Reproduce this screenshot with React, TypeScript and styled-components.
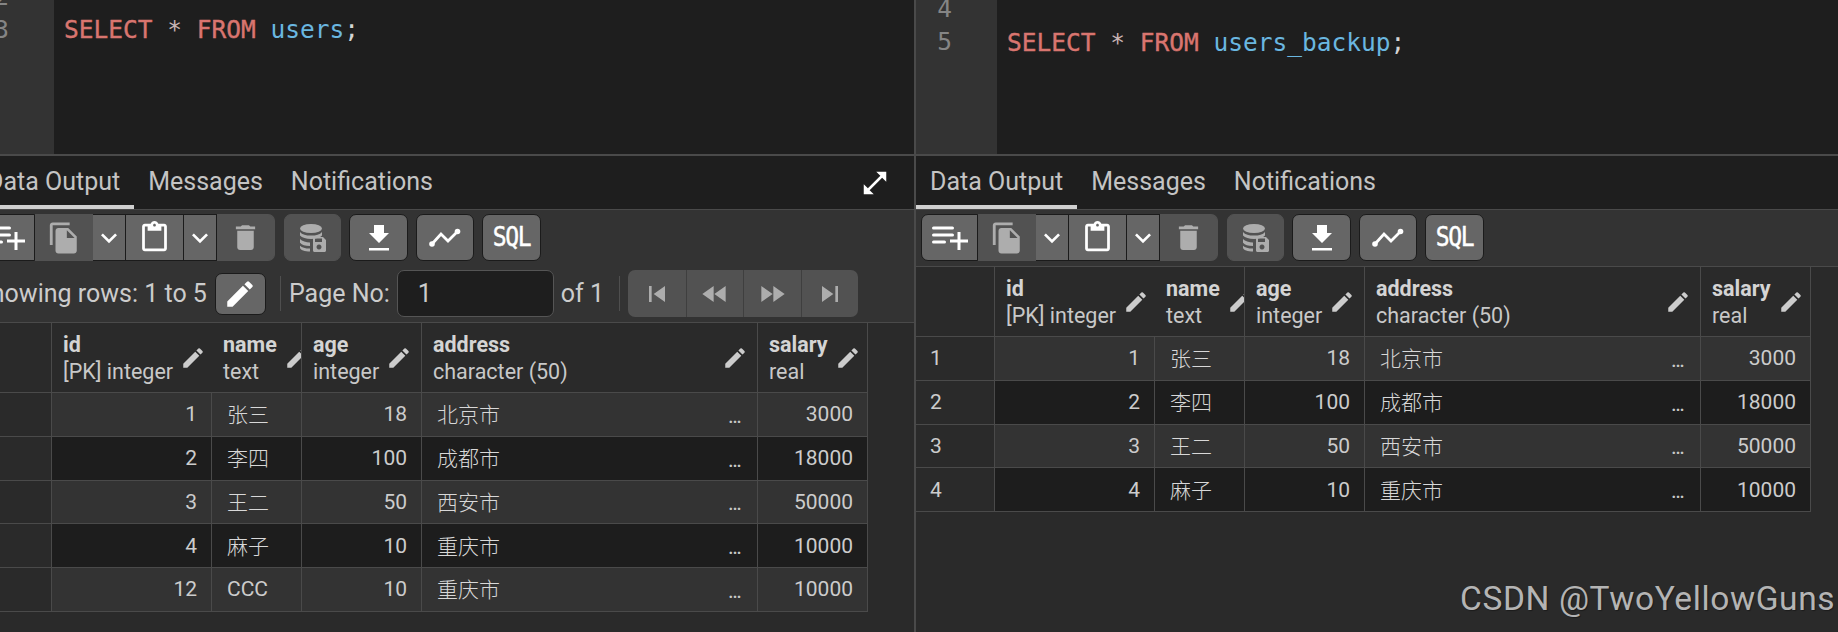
import React from "react";
import styled, { createGlobalStyle } from "styled-components";
import {
  MdContentPaste, MdDelete, MdEdit, MdFastForward, MdFastRewind, MdFileCopy,
  MdKeyboardArrowDown, MdOpenInFull, MdSkipNext, MdSkipPrevious,
} from "react-icons/md";

const UI = `Roboto, "Noto Sans CJK SC", sans-serif`;
const COLS = "79px 160px 90px 120px 336px 110px";

const Global = createGlobalStyle`
  html, body { margin: 0; padding: 0; background: #2a2a2a; }
  body { width: 1838px; height: 632px; overflow: hidden; font-family: ${UI}; }
`;

const Page = styled.div`
  position: relative;
  display: grid;
  grid-template-columns: 914px 924px;
  width: 1838px;
  height: 632px;
  overflow: hidden;
`;
const Pane = styled.section<{ $shift?: number; $divider?: boolean }>`
  display: flex;
  flex-direction: column;
  height: 632px;
  width: ${(p) => (p.$shift ? 941 : 922)}px;
  margin-left: ${(p) => -(p.$shift ?? 0)}px;
  background: #2a2a2a;
  ${(p) => p.$divider && "border-left: 2px solid #4a4a4a;"}
`;
const PaneClip = styled.div`
  overflow: hidden;
  height: 632px;
`;
const Editor = styled.div`
  display: flex;
  height: 154px;
  flex: none;
  background: #1e1e1e;
  border-bottom: 2px solid #4a4a4a;
  overflow: hidden;
`;
const Gutter = styled.div<{ $top: number }>`
  flex: none;
  width: 81px;
  height: 154px;
  box-sizing: border-box;
  background: #333;
  padding-right: 45px;
  color: #858585;
  font: 24.5px/33px "DejaVu Sans Mono", monospace;
  text-align: right;
  overflow: hidden;
  & > div { margin-top: ${(p) => p.$top}px; }
`;
const Code = styled.div<{ $top: number }>`
  padding: ${(p) => p.$top}px 0 0 10px;
  font: 24.5px/33px "DejaVu Sans Mono", monospace;
  color: #d4d4d4;
  white-space: pre;
`;
const Keyword = styled.span`
  color: #d9756f;
  -webkit-text-stroke: 0.4px #d9756f;
`;
const Star = styled.span`
  color: #c8b4b4;
`;
const TableName = styled.span`
  color: #6ab7e0;
`;
const Tabs = styled.div`
  display: flex;
  align-items: stretch;
  flex: none;
  height: 54px;
  box-sizing: border-box;
  background: #1e1e1e;
  border-bottom: 1px solid #4a4a4a;
`;
const Tab = styled.div<{ $active?: boolean }>`
  display: flex;
  align-items: center;
  padding: 2px 14px 0;
  font-size: 25px;
  color: #c4c4c4;
  box-sizing: border-box;
  border-bottom: 4px solid ${(p) => (p.$active ? "#d0d0d0" : "transparent")};
`;
const Expand = styled.div`
  margin-left: auto;
  margin-right: 24px;
  display: flex;
  align-items: center;
  color: #fff;
`;
const ToolArea = styled.div`
  flex: none;
  background: #333;
  border-bottom: 1px solid #4a4a4a;
`;
const ToolRow = styled.div`
  display: flex;
  align-items: center;
  height: 56px;
  box-sizing: border-box;
  padding: 4px 0 5px 5px;
  gap: 8px;
`;
const Group = styled.div`
  display: flex;
  height: 47px;
  margin-right: 1px;
`;
const ToolButton = styled.div<{ $w: number; $off?: boolean; $solo?: boolean }>`
  display: flex;
  align-items: center;
  justify-content: center;
  box-sizing: border-box;
  width: ${(p) => p.$w}px;
  height: 47px;
  background: ${(p) => (p.$off ? "#525252" : "#666")};
  color: ${(p) => (p.$off ? "#adadad" : "#fff")};
  border: 1px solid ${(p) => (p.$off ? "#525252" : "#1b1b1b")};
  border-left-width: ${(p) => (p.$solo ? 1 : 0)}px;
  border-radius: ${(p) => (p.$solo ? "7px" : "0")};
  &:first-child { border-left-width: 1px; border-radius: 7px 0 0 7px; }
  &:last-child { border-radius: ${(p) => (p.$solo ? "7px" : "0 7px 7px 0")}; }
`;
const SqlLabel = styled.span`
  display: inline-block;
  font: 23px/1 "DejaVu Sans Mono", monospace;
  letter-spacing: -1.4px;
  -webkit-text-stroke: 0.4px #fff;
  color: #fff;
  transform: scaleY(1.15);
`;
const PagerRow = styled.div`
  display: flex;
  align-items: center;
  height: 56px;
  box-sizing: border-box;
  padding: 0 0 1px 0;
  color: #cccccc;
  font-size: 25px;
`;
const PagerText = styled.span<{ $left: number }>`
  margin-left: ${(p) => p.$left}px;
  white-space: nowrap;
`;
const EditButton = styled.div`
  display: flex;
  align-items: center;
  justify-content: center;
  width: 51px;
  height: 42px;
  margin-left: 8px;
  box-sizing: border-box;
  background: #666;
  border: 1px solid #1b1b1b;
  border-radius: 7px;
  color: #fff;
`;
const VDivider = styled.div<{ $left: number }>`
  width: 1px;
  height: 35px;
  margin-left: ${(p) => p.$left}px;
  background: #4f4f4f;
`;
const PageInput = styled.div`
  width: 157px;
  height: 47px;
  margin-left: 7px;
  padding-left: 20px;
  box-sizing: border-box;
  display: flex;
  align-items: center;
  background: #1e1e1e;
  border: 1px solid #555;
  border-radius: 7px;
  color: #ccc;
`;
const NavGroup = styled.div`
  display: flex;
  margin-left: 8px;
  height: 47px;
  border-radius: 7px;
  overflow: hidden;
  background: #525252;
`;
const NavButton = styled.div`
  display: flex;
  align-items: center;
  justify-content: center;
  width: 57.5px;
  color: #adadad;
  box-sizing: border-box;
  & + & { border-left: 1px solid #3f3f3f; }
`;
const Table = styled.div`
  font-size: 21px;
  color: #ccc;
`;
const Row = styled.div<{ $tone?: "head" | "odd" | "even" }>`
  display: grid;
  grid-template-columns: ${COLS};
  height: ${(p) => (p.$tone === "head" ? "70px" : "43.75px")};
  box-sizing: border-box;
  width: 895px;
  border-bottom: 1px solid #4a4a4a;
  background: ${(p) => (p.$tone === "odd" ? "#333" : p.$tone === "even" ? "#1d1d1d" : "#2a2a2a")};
`;
const RowNumber = styled.div`
  display: flex;
  align-items: center;
  padding-left: 14px;
  background: #2a2a2a;
  border-right: 1px solid #4a4a4a;
  box-sizing: border-box;
`;
const HeadCell = styled.div<{ $open?: boolean }>`
  display: flex;
  align-items: center;
  gap: 7px;
  min-width: 0;
  overflow: hidden;
  padding: 0 9px 0 11px;
  box-sizing: border-box;
  font-size: 21.5px;
  border-right: ${(p) => (p.$open ? "none" : "1px solid #4a4a4a")};
`;
const HeadText = styled.div`
  flex: 1 0 auto;
  line-height: 27.5px;
  padding-top: 1px;
`;
const HeadName = styled.div`
  font-weight: 700;
  color: #d4d4d4;
`;
const HeadType = styled.div`
  color: #c8c8c8;
`;
const Pencil = styled(MdEdit)`
  flex: none;
  color: #ccc;
`;
const Cell = styled.div<{ $num?: boolean }>`
  display: flex;
  align-items: center;
  justify-content: ${(p) => (p.$num ? "flex-end" : "space-between")};
  padding: ${(p) => (p.$num ? "0 14px 0 0" : "0 16px 0 15px")};
  box-sizing: border-box;
  border-right: 1px solid #4a4a4a;
  font-weight: 400;
  white-space: nowrap;
`;
const CjkText = styled.span`
  font-family: "Noto Sans CJK SC", sans-serif;
  font-weight: 300;
  color: #d8d8d8;
  padding-bottom: 2px;
`;
const Ellipsis = styled.span`
  font-size: 16px;
  padding-top: 6px;
  font-weight: 700;
  letter-spacing: -0.5px;
  color: #c8c8c8;
`;
const Watermark = styled.div`
  position: absolute;
  left: 1460px;
  top: 579px;
  font-family: Roboto, sans-serif;
  font-size: 33.5px;
  letter-spacing: 0.6px;
  line-height: 40px;
  color: #b4b4b4;
  text-shadow: 1px 1px 1px rgba(0, 0, 0, 0.35);
  white-space: nowrap;
`;

const AddRowIcon = () => (
  <svg width="36" height="24" viewBox="0 0 36 24" fill="none" stroke="#fff" strokeLinecap="round" strokeWidth="3">
    <path d="M1.500 2h19M1.500 9h19M1.500 16h11" />
    <path d="M27 6v18M18 15h18" strokeLinecap="butt" />
  </svg>
);
const SaveDbIcon = () => (
  <svg width="26" height="28" viewBox="0 0 26 28" fill="#adadad">
    <ellipse cx="11" cy="4.500" rx="11" ry="4.500" />
    <path d="M0 8c2 2.600 6 3.600 11 3.600S20 10.600 22 8v3.500c-2 2.400-6 3.400-11 3.400S2 13.900 0 11.500zM0 15c2 2.400 6 3.300 10 3.400V22C5 22 2 21 0 18.800zM0 21.800c2 1.900 5 2.800 10 2.800v3C5 27.600 0 26 0 23.500z" />
    <path fillRule="evenodd" d="M13 13h10l3 3v10.500c0 .8-.7 1.500-1.500 1.500h-10c-.8 0-1.500-.7-1.500-1.500zM15 14.500v3.500h7v-3.500zM19 20.500a2.500 2.500 0 1 0 .01 0z" />
  </svg>
);
const DownloadIcon = () => (
  <svg width="22" height="26" viewBox="0 0 22 26" fill="#fff">
    <path d="M6 0h10v8h5L11 18 1 8h5z" />
    <rect x="1" y="23" width="20" height="2.500" />
  </svg>
);
const GraphIcon = () => (
  <svg width="32" height="20" viewBox="0 0 32 20" fill="#fff" stroke="#fff">
    <path d="M3 16 L12 6 L19 13 L28 4" fill="none" strokeWidth="2.800" />
    <circle cx="3" cy="16" r="2.800" stroke="none" />
    <circle cx="28.500" cy="3.500" r="2.800" stroke="none" />
  </svg>
);

const Toolbar = () => (
  <ToolRow>
    <Group>
      <ToolButton $w={57}><AddRowIcon /></ToolButton>
      <ToolButton $w={58} $off><MdFileCopy size={34} /></ToolButton>
      <ToolButton $w={33}><MdKeyboardArrowDown size={34} /></ToolButton>
      <ToolButton $w={58}><MdContentPaste size={33} /></ToolButton>
      <ToolButton $w={33}><MdKeyboardArrowDown size={34} /></ToolButton>
      <ToolButton $w={58} $off><MdDelete size={33} /></ToolButton>
    </Group>
    <ToolButton $w={57} $off $solo><SaveDbIcon /></ToolButton>
    <ToolButton $w={59} $solo><DownloadIcon /></ToolButton>
    <ToolButton $w={58} $solo><GraphIcon /></ToolButton>
    <ToolButton $w={59} $solo><SqlLabel>SQL</SqlLabel></ToolButton>
  </ToolRow>
);

const columns = [
  { name: "id", type: "[PK] integer", open: true },
  { name: "name", type: "text" },
  { name: "age", type: "integer" },
  { name: "address", type: "character (50)" },
  { name: "salary", type: "real" },
];

type Rec = [number, string, number, string, number];
const rowsA: Rec[] = [
  [1, "张三", 18, "北京市", 3000],
  [2, "李四", 100, "成都市", 18000],
  [3, "王二", 50, "西安市", 50000],
  [4, "麻子", 10, "重庆市", 10000],
  [12, "CCC", 10, "重庆市", 10000],
];
const rowsB = rowsA.slice(0, 4);

const isAscii = (s: string) => /^[\x00-\x7f]*$/.test(s);

const DataTable = ({ rows }: { rows: Rec[] }) => (
  <Table>
    <Row $tone="head">
      <RowNumber />
      {columns.map((c) => (
        <HeadCell key={c.name} $open={c.open}>
          <HeadText>
            <HeadName>{c.name}</HeadName>
            <HeadType>{c.type}</HeadType>
          </HeadText>
          <Pencil size={26} />
        </HeadCell>
      ))}
    </Row>
    {rows.map((r, i) => (
      <Row key={i} $tone={i % 2 === 0 ? "odd" : "even"}>
        <RowNumber>{i + 1}</RowNumber>
        <Cell $num>{r[0]}</Cell>
        <Cell>{isAscii(r[1]) ? r[1] : <CjkText>{r[1]}</CjkText>}</Cell>
        <Cell $num>{r[2]}</Cell>
        <Cell><CjkText>{r[3]}</CjkText><Ellipsis>...</Ellipsis></Cell>
        <Cell $num>{r[4]}</Cell>
      </Row>
    ))}
  </Table>
);

const Query = ({ name }: { name: string }) => (
  <>
    <Keyword>SELECT</Keyword> <Star>*</Star> <Keyword>FROM</Keyword> <TableName>{name}</TableName>;
  </>
);

export default function App() {
  return (
    <Page>
      <Global />
      <PaneClip>
        <Pane $shift={27}>
          <Editor>
            <Gutter $top={-20}><div>2<br />3</div></Gutter>
            <Code $top={13}><Query name="users" /></Code>
          </Editor>
          <Tabs>
            <Tab $active>Data Output</Tab>
            <Tab>Messages</Tab>
            <Tab>Notifications</Tab>
            <Expand><MdOpenInFull size={30} /></Expand>
          </Tabs>
          <ToolArea>
            <Toolbar />
            <PagerRow>
              <PagerText $left={3}>Showing rows: 1 to 5</PagerText>
              <EditButton><MdEdit size={34} /></EditButton>
              <VDivider $left={14} />
              <PagerText $left={8}>Page No:</PagerText>
              <PageInput>1</PageInput>
              <PagerText $left={7}>of 1</PagerText>
              <VDivider $left={15} />
              <NavGroup>
                <NavButton><MdSkipPrevious size={32} /></NavButton>
                <NavButton><MdFastRewind size={32} /></NavButton>
                <NavButton><MdFastForward size={32} /></NavButton>
                <NavButton><MdSkipNext size={32} /></NavButton>
              </NavGroup>
            </PagerRow>
          </ToolArea>
          <DataTable rows={rowsA} />
        </Pane>
      </PaneClip>
      <PaneClip>
        <Pane $divider>
          <Editor>
            <Gutter $top={-8}><div>4<br />5</div></Gutter>
            <Code $top={26}><Query name="users_backup" /></Code>
          </Editor>
          <Tabs>
            <Tab $active>Data Output</Tab>
            <Tab>Messages</Tab>
            <Tab>Notifications</Tab>
          </Tabs>
          <ToolArea>
            <Toolbar />
          </ToolArea>
          <DataTable rows={rowsB} />
        </Pane>
      </PaneClip>
      <Watermark>CSDN @TwoYellowGuns</Watermark>
    </Page>
  );
}
